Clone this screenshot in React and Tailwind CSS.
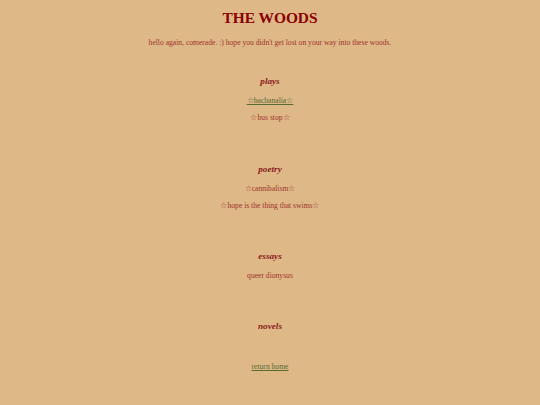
export default function App() {
  const serif = { fontFamily: '"Liberation Serif", "Times New Roman", serif' };

  return (
    <div className="min-h-[405px] w-full bg-[#deb887] text-center text-[#a0342a]" style={serif}>
      <div className="flex flex-col items-center pt-[9px] pb-[30px]">
        <h1 className="text-[15.4px] leading-[18px] font-bold text-[#8b0000]">THE WOODS</h1>
        <p className="mt-[11px] text-[7.6px] leading-[9px]">
          hello again, comerade. :) hope you didn't get lost on your way into these woods.
        </p>

        <h3 className="mt-[29px] text-[9.2px] leading-[11px] font-bold italic text-[#8b1a1a]">plays</h3>
        <a href="#" className="mt-[9px] text-[7.6px] leading-[9px] text-[#556b2f] underline">
          ☆bachanalia☆
        </a>
        <p className="mt-[8px] text-[7.6px] leading-[9px]">☆bus stop☆</p>

        <h3 className="mt-[42px] text-[9.2px] leading-[11px] font-bold italic text-[#8b1a1a]">poetry</h3>
        <p className="mt-[9px] text-[7.6px] leading-[9px]">☆cannibalism☆</p>
        <p className="mt-[8px] text-[7.6px] leading-[9px]">☆hope is the thing that swims☆</p>

        <h3 className="mt-[41px] text-[9.2px] leading-[11px] font-bold italic text-[#8b1a1a]">essays</h3>
        <p className="mt-[9px] text-[7.6px] leading-[9px]">queer dionysus</p>

        <h3 className="mt-[41px] text-[9.2px] leading-[11px] font-bold italic text-[#8b1a1a]">novels</h3>

        <a href="#" className="mt-[30px] text-[7.6px] leading-[9px] text-[#556b2f] underline">
          return home
        </a>
      </div>
    </div>
  );
}
